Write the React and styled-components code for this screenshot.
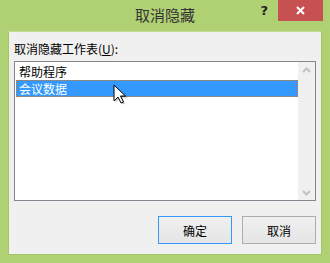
import React from 'react'
import styled, { createGlobalStyle } from 'styled-components'

const Global = createGlobalStyle`
  html, body {
    margin: 0;
    padding: 0;
    background: #fff;
  }
  * {
    box-sizing: border-box;
  }
`

const Window = styled.div`
  position: relative;
  width: 330px;
  height: 263px;
  background: #b0d074;
  display: flex;
  flex-direction: column;
  font-family: 'Noto Sans CJK SC', 'Liberation Sans', sans-serif;
  font-size: 12px;
  color: #000;
  overflow: hidden;
`

const TitleBar = styled.div`
  position: relative;
  height: 31px;
  flex: none;
  display: flex;
  justify-content: center;
  .title {
    font-size: 15px;
    line-height: 30px;
    color: #333;
    letter-spacing: 0;
  }
`

const Controls = styled.div`
  position: absolute;
  top: 0;
  right: 7px;
  display: flex;
  align-items: flex-start;
`

const Help = styled.span`
  font-family: 'DejaVu Sans', sans-serif;
  font-weight: 700;
  font-size: 13px;
  line-height: 21px;
  color: #222;
  margin-right: 10px;
`

const CloseButton = styled.div`
  width: 45px;
  height: 21px;
  background: #c75050;
  display: flex;
  align-items: center;
  justify-content: center;
`

const Content = styled.div`
  flex: 1;
  margin: 0 8px 8px;
  background: #f0f0f0;
  border: 1px solid #a6c46c;
  border-top-color: #c6dc96;
  padding: 8px 5px 10px;
  display: flex;
  flex-direction: column;
`

const Label = styled.div`
  line-height: 17px;
  margin-bottom: 4px;
  color: #000;
  u {
    text-decoration: underline;
  }
`

const ListBox = styled.div`
  height: 140px;
  border: 1px solid #828790;
  background: #fff;
  display: flex;
`

const Items = styled.ul`
  list-style: none;
  margin: 0;
  padding: 1px 0 0 1px;
  flex: 1;
`

const Item = styled.li`
  height: 17px;
  line-height: 17px;
  padding-left: 3px;
  color: ${p => (p.$selected ? '#fff' : '#000')};
  background: ${p => (p.$selected ? '#3399ff' : 'transparent')};
  outline: ${p => (p.$selected ? '1px dotted #e07a10' : 'none')};
  outline-offset: -1px;
`

const ScrollBar = styled.div`
  width: 17px;
  background: #f0f0f0;
  display: flex;
  flex-direction: column;
  justify-content: space-between;
  align-items: center;
  padding: 5px 0 4px;
`

const Buttons = styled.div`
  display: flex;
  justify-content: flex-end;
  gap: 10px;
  margin-top: 15px;
  padding-right: 0;
`

const Button = styled.button`
  width: 74px;
  height: 28px;
  font-family: inherit;
  font-size: 12px;
  color: #000;
  border: 1px solid ${p => (p.$default ? '#3399ff' : '#adadad')};
  background: linear-gradient(#f0f0f0, #e5e5e5);
  padding: 0;
`

const Cursor = styled.svg`
  position: absolute;
  left: 113px;
  top: 84px;
`

const Chevron = ({ up }) => (
  <svg width="9" height="6" viewBox="0 0 9 6">
    <path
      d={up ? 'M1 5 L4.5 1.5 L8 5' : 'M1 1 L4.5 4.5 L8 1'}
      fill="none"
      stroke="#c2c2c2"
      strokeWidth="2"
    />
  </svg>
)

export default function App() {
  return (
    <Window>
      <Global />
      <TitleBar>
        <span className="title">取消隐藏</span>
        <Controls>
          <Help>?</Help>
          <CloseButton>
            <svg width="9" height="9" viewBox="0 0 9 9">
              <path d="M1 1 L8 8 M8 1 L1 8" stroke="#fff" strokeWidth="2" />
            </svg>
          </CloseButton>
        </Controls>
      </TitleBar>
      <Content>
        <Label>
          取消隐藏工作表(<u>U</u>):
        </Label>
        <ListBox>
          <Items>
            <Item>帮助程序</Item>
            <Item $selected>会议数据</Item>
          </Items>
          <ScrollBar>
            <Chevron up />
            <Chevron />
          </ScrollBar>
        </ListBox>
        <Buttons>
          <Button $default>确定</Button>
          <Button>取消</Button>
        </Buttons>
      </Content>
      <Cursor width="16" height="22" viewBox="0 0 16 22">
        <path d="M2.5 2.5 L2.5 18.5 L6.5 14.5 L9.5 20.5 L12 19.5 L9 13.5 L14.5 13.5 Z" fill="rgba(0,0,0,0.25)" />
        <path d="M1 1 L1 17 L5 13 L8 19 L10.5 18 L7.5 12 L12.5 12 Z" fill="#fff" stroke="#000" strokeWidth="1" />
      </Cursor>
    </Window>
  )
}
